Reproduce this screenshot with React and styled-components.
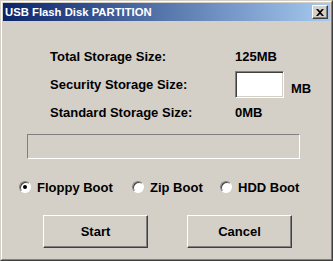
import React, { useState } from 'react';
import styled, { createGlobalStyle } from 'styled-components';

const Global = createGlobalStyle`
  html, body { margin: 0; padding: 0; background: #d4d0c8; }
  * { box-sizing: border-box; }
`;

const Window = styled.div`
  width: 333px;
  height: 261px;
  background: #d4d0c8;
  border-top: 1px solid #d4d0c8;
  border-left: 1px solid #d4d0c8;
  border-right: 1px solid #404040;
  border-bottom: 1px solid #404040;
  font-family: 'Liberation Sans', Arial, sans-serif;
  font-weight: bold;
  color: #000;
`;

const Frame = styled.div`
  height: 100%;
  padding: 1px;
  border-top: 1px solid #fff;
  border-left: 1px solid #fff;
  border-right: 1px solid #808080;
  border-bottom: 1px solid #808080;
  display: flex;
  flex-direction: column;
`;

const TitleBar = styled.div`
  height: 18px;
  display: flex;
  align-items: center;
  justify-content: space-between;
  padding: 0 2px 0 2px;
  background: linear-gradient(to right, #0a246a 0%, #a6caf0 100%);
`;

const Title = styled.span`
  color: #fff;
  font-size: 11.3px;
  font-weight: bold;
`;

const CloseButton = styled.button`
  width: 16px;
  height: 14px;
  padding: 0;
  background: #d4d0c8;
  border: 1px solid;
  border-color: #fff #404040 #404040 #fff;
  box-shadow: inset -1px -1px 0 #808080;
  display: flex;
  align-items: center;
  justify-content: center;
`;

const Info = styled.div`
  margin-top: 25px;
  padding-left: 47px;
  display: grid;
  grid-template-columns: 185px 56px auto;
  grid-template-rows: 20px 28px 20px;
  row-gap: 4px;
  align-items: center;
  font-size: 13px;
`;

const Value = styled.span``;

const SizeInput = styled.input`
  width: 49px;
  height: 27px;
  background: #fff;
  border: 1px solid;
  border-color: #808080 #fff #fff #808080;
  box-shadow: inset 1px 1px 0 #404040, inset -1px -1px 0 #d4d0c8;
  outline: none;
  font: inherit;
  padding: 0 3px;
`;

const Unit = styled.span`
  padding-top: 8px;
`;

const Progress = styled.div`
  margin: 12px 0 0 24px;
  width: 273px;
  height: 25px;
  border: 1px solid;
  border-color: #808080 #fff #fff #808080;
`;

const RadioRow = styled.div`
  margin: 20px 0 0 16px;
  height: 16px;
  display: grid;
  grid-template-columns: 113px 88px auto;
  align-items: center;
  font-size: 13px;
`;

const RadioItem = styled.label`
  display: flex;
  align-items: center;
  gap: 6px;
`;

const Circle = styled.span`
  width: 12px;
  height: 12px;
  border-radius: 50%;
  background: #fff;
  border: 1px solid;
  border-color: #808080 #fff #fff #808080;
  box-shadow: inset 1px 1px 0 #404040;
  display: flex;
  align-items: center;
  justify-content: center;
  &::after {
    content: '';
    width: 4px;
    height: 4px;
    border-radius: 50%;
    background: ${p => (p.$on ? '#000' : 'transparent')};
  }
`;

const Buttons = styled.div`
  margin: 20px 0 0 40px;
  display: flex;
  gap: 39px;
`;

const Button = styled.button`
  width: 105px;
  height: 33px;
  background: #d4d0c8;
  border: 1px solid;
  border-color: #fff #404040 #404040 #fff;
  box-shadow: inset -1px -1px 0 #808080;
  font-family: 'Liberation Sans', Arial, sans-serif;
  font-weight: bold;
  font-size: 13px;
  color: #000;
  padding: 0;
`;

export default function App() {
  const [boot, setBoot] = useState('floppy');
  const opts = [
    ['floppy', 'Floppy Boot'],
    ['zip', 'Zip Boot'],
    ['hdd', 'HDD Boot'],
  ];

  return (
    <>
      <Global />
      <Window>
        <Frame>
          <TitleBar>
            <Title>USB Flash Disk PARTITION</Title>
            <CloseButton>
              <svg width="8" height="7" viewBox="0 0 8 7">
                <path d="M0 0h2l2 2 2-2h2L5 3.5 8 7H6L4 5 2 7H0l3-3.5z" fill="#000" />
              </svg>
            </CloseButton>
          </TitleBar>

          <Info>
            <span>Total Storage Size:</span>
            <Value>125MB</Value>
            <span />
            <span>Security Storage Size:</span>
            <SizeInput />
            <Unit>MB</Unit>
            <span>Standard Storage Size:</span>
            <Value>0MB</Value>
            <span />
          </Info>

          <Progress />

          <RadioRow>
            {opts.map(([k, label]) => (
              <RadioItem key={k} onClick={() => setBoot(k)}>
                <Circle $on={boot === k} />
                {label}
              </RadioItem>
            ))}
          </RadioRow>

          <Buttons>
            <Button>Start</Button>
            <Button>Cancel</Button>
          </Buttons>
        </Frame>
      </Window>
    </>
  );
}
